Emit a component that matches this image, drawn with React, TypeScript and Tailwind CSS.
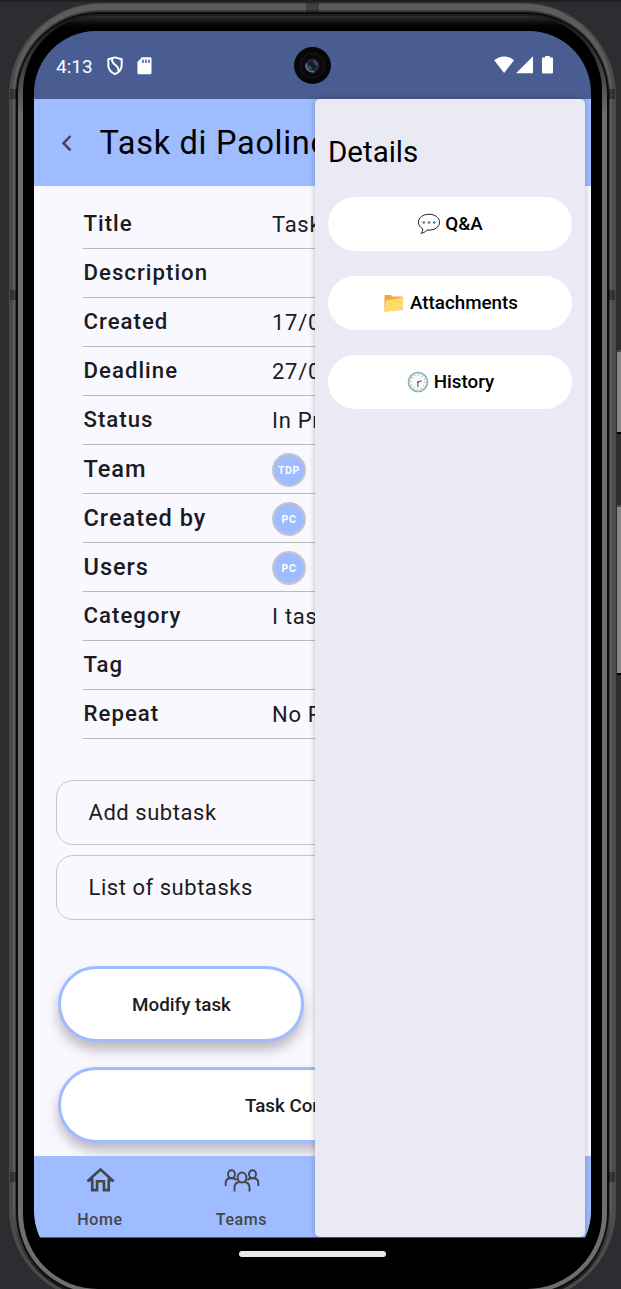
import type { ReactNode } from "react";

type Row = { label: string; value?: string; avatar?: string };

const rows: Row[] = [
  { label: "Title", value: "Task di Paolino" },
  { label: "Description" },
  { label: "Created", value: "17/01/2024" },
  { label: "Deadline", value: "27/01/2024" },
  { label: "Status", value: "In Progress" },
  { label: "Team", avatar: "TDP" },
  { label: "Created by", avatar: "PC" },
  { label: "Users", avatar: "PC" },
  { label: "Category", value: "I task" },
  { label: "Tag" },
  { label: "Repeat", value: "No Repeat" },
];

function Bezel({ children }: { children: ReactNode }) {
  return (
    <div className="ml-[9px] mt-[3px] h-[1298px] w-[607px] shrink-0 rounded-[92px] bg-[#4b4c4a] px-[4px] pt-[1px] pb-[3px]">
      <div className="h-full rounded-[88px] bg-linear-to-b from-[#5c5d5b] from-93% to-[#1c1c1c] to-98% px-[2px] pt-[6px] pb-[2px]">
        <div className="h-full rounded-[85px] bg-[#3c3d3b] bg-linear-to-b from-[#3c3d3b] from-95% to-[#0c0c0c] px-[1px] pt-[2px] pb-[1px]">
          <div className="h-full rounded-[83px] bg-[#0c0c0c] px-[2px] pt-[2px] pb-[2px]">
            <div className="h-full rounded-[80px] bg-linear-to-b from-[#1c1c1c] from-1% via-[#6e6e6e] via-8% to-[#6e6e6e] to-98% px-[5px] pt-[2px] pb-[4px]">
              <div className="h-full rounded-[75px] bg-black bg-linear-to-b from-[#2e2e2e] to-black to-[15px] px-[11px] pt-[15px] pb-[16px]">
                {children}
              </div>
            </div>
          </div>
        </div>
      </div>
    </div>
  );
}

function StatusBar() {
  return (
    <div className="flex h-[68px] shrink-0 items-center bg-[#4a5d92] text-white">
      <span className="ml-[22px] mt-[2px] w-[50px] text-[19px] leading-none">4:13</span>
      <svg className="mt-[2px]" width="18" height="20" viewBox="0 0 18 20" fill="none" stroke="white">
        <path d="M9 1.4 2.3 3.3V9c0 4 2.5 7.300 6.700 9.200 4.200-1.900 6.700-5.200 6.700-9.200V3.300Z" strokeWidth="2" strokeLinejoin="round" />
        <path d="M6.200 2.800c-.8 3.700 1.200 4.700 3.500 6.400 2 1.500 3.200 3 2.800 6.300" strokeWidth="2" />
      </svg>
      <svg className="ml-[13px] mt-[2px]" width="15" height="18" viewBox="0 0 15 18">
        <path d="M5 .3h8.200c.8 0 1.300.6 1.300 1.300v14.200c0 .8-.5 1.500-1.300 1.500H1.700c-.8 0-1.300-.6-1.300-1.500V5Z" fill="white" />
        <path d="M6 2.500v3.400M9 2.500v3.400M12 2.500v3.400" stroke="#4a5d92" strokeWidth="1.500" />
      </svg>
      <div className="ml-[142px] flex size-[37px] items-center justify-center rounded-full bg-[#060607]">
        <svg width="37" height="37" viewBox="0 0 37 37">
          <circle cx="18.500" cy="18.500" r="12.500" fill="#090a0b" stroke="#18191b" />
          <circle cx="18.500" cy="18.500" r="6.800" fill="#242a35" />
          <path d="M12.500 16.500a6.300 6.300 0 0 0 8 8" fill="none" stroke="#77757a" strokeWidth="1.700" />
          <circle cx="18.500" cy="18" r="4" fill="#121d2b" />
          <path d="M15 18.500c0 2 1 3 2.500 3" stroke="#236586" strokeWidth="2" fill="none" />
          <path d="M19 14.500c2.500.3 3.700 1.700 3.200 4" stroke="#543d6a" strokeWidth="2.500" fill="none" />
        </svg>
      </div>
      <svg className="ml-[163px]" width="60" height="20" viewBox="0 0 60 20" fill="white">
        <path d="M.2 5.200C5.800.1 14.200.1 20 5.200L10.100 18Z" />
        <path d="M39 1.300V18.300H22Z" />
        <path d="M51.200 2.600V1.100h4.600v1.500h2c.8 0 1.200.5 1.200 1.200v13.400c0 .8-.5 1.300-1.200 1.300h-8.500c-.8 0-1.300-.5-1.300-1.300V3.800c0-.7.500-1.200 1.300-1.200Z" />
      </svg>
    </div>
  );
}

function Detail({ label, value, avatar }: Row) {
  const labelStyle = avatar ? "mt-[1px] text-[23.6px] tracking-[0.95px]" : "-mt-[1px] text-[22.2px] tracking-[1.02px]";
  return (
    <div className="flex h-[49px] items-center border-b border-[#babac0] pl-[0.5px] text-[22px] text-[#1b1b21]">
      <span className={`w-[188.500px] font-medium ${labelStyle}`}>{label}</span>
      {value && <span className="whitespace-nowrap tracking-[0.72px]">{value}</span>}
      {avatar && (
        <span className="mt-[2px] flex size-[34px] items-center justify-center rounded-full border-2 border-[#c6c6ca] bg-[#9ebcff] pt-[1px] text-[10.500px] font-bold tracking-[0.7px] text-white">
          {avatar}
        </span>
      )}
    </div>
  );
}

function SubtaskBox({ children }: { children: ReactNode }) {
  return (
    <div className="flex h-[65px] w-[513px] items-center rounded-[17px] border-[1.500px] border-[#c6c6c8] pl-[31.500px] text-[22px] tracking-[0.54px] text-[#1b1b21]">
      {children}
    </div>
  );
}

const pill =
  "flex h-[76px] items-center justify-center rounded-full border-[3px] border-[#9ebcff] bg-white pl-[1px] pt-[2px] text-[18.8px] font-medium text-[#1b1b21] shadow-[0_8px_12px_rgba(60,40,45,0.3)]";

function Drawer() {
  return (
    <aside className="absolute top-[68px] left-[281px] h-[1138px] w-[270px] rounded-[5px] bg-[#eaeaf5] px-[13px] text-black shadow-[0_0_6px_rgba(0,0,0,0.25)]">
      <h2 className="mt-[35px] h-[36px] text-[29.5px] leading-[36px]">Details</h2>
      <div className="mt-[27px] flex flex-col gap-[25px] text-[18.8px] font-medium">
        <DrawerButton label="Q&A">
          <svg width="24" height="24" viewBox="0 0 24 24">
            <path d="M12 2.300C6 2.300 1.500 5.500 1.500 10.200c0 3 1.700 5.200 4.200 6.500.2 2-.5 3.600-1.800 4.600 2.700-.2 4.800-1.600 6.100-3.300 7 .7 12.500-2.600 12.500-7.800 0-4.700-4.500-7.900-10.500-7.900Z" fill="white" stroke="#222" strokeWidth="1" />
            <g fill="#607d8b">
              <circle cx="6.800" cy="10.500" r="1.350" />
              <circle cx="12" cy="10.500" r="1.350" />
              <circle cx="17.200" cy="10.500" r="1.350" />
            </g>
          </svg>
        </DrawerButton>
        <DrawerButton label="Attachments">
          <svg width="24" height="24" viewBox="0 0 24 24">
            <path d="M2.500 5.300c0-.8.500-1.200 1.300-1.200h5l1.500 1.500h9c.8 0 1.200.4 1.200 1.200v12L3 20.500c-.4 0-.5-.2-.5-.6Z" fill="#f6a63a" />
            <path d="M4.500 9.400 21 6.300c.5-.1.700.2.600.7L20.300 17c-.1.900-.5 1.300-1.300 1.500L3.300 21c-.5.100-.8-.2-.7-.7l1.100-10c.1-.5.3-.8.8-.9Z" fill="#ffdc68" />
          </svg>
        </DrawerButton>
        <DrawerButton label="History">
          <svg width="24" height="24" viewBox="0 0 24 24">
            <circle cx="12" cy="12" r="9.500" fill="#fafafa" stroke="#88b2bf" strokeWidth="1.700" />
            <circle cx="12" cy="12" r="7" fill="none" stroke="#777" strokeWidth="1.100" strokeDasharray=".8 2.865" />
            <path d="m12 12-.2 5M12 12l3.700-1.400" stroke="#5a3c3c" strokeWidth="1" />
            <circle cx="12" cy="12" r="1" fill="#8c4b4b" />
          </svg>
        </DrawerButton>
      </div>
    </aside>
  );
}

function DrawerButton({ label, children }: { label: string; children: ReactNode }) {
  return (
    <button className="flex h-[54px] w-[244px] items-center justify-center gap-[4px] rounded-full bg-white">
      {children}
      <span>{label}</span>
    </button>
  );
}

function BottomNav() {
  return (
    <nav className="flex h-[82px] shrink-0 border-b border-[#48598a] bg-[#9ebcff] text-[16px] font-medium tracking-[0.6px] text-[#45464a]">
      <div className="flex w-[131px] flex-col items-center pt-[8px] pl-[1px]">
        <svg className="ml-[1px]" width="33" height="33" viewBox="0 0 24 24" fill="none" stroke="#444548" strokeWidth="1.900">
          <path d="M2.500 12.500 12 4l9.500 8.500M6 10.500V19h3.500v-6.500h5V19H18v-8.500" />
          <path d="M2.500 12.200H6M18 12.200h3.500" strokeWidth="1.200" />
        </svg>
        <span className="mt-[11px]">Home</span>
      </div>
      <div className="flex w-[152px] flex-col items-center pt-[8px] pl-[1px]">
        <svg className="ml-[1px]" width="36" height="33" viewBox="0 0 36 33" fill="none" stroke="#444548" strokeWidth="1.900">
          <ellipse cx="7.500" cy="10.300" rx="3.500" ry="4" />
          <ellipse cx="28.500" cy="10.300" rx="3.500" ry="4" />
          <ellipse cx="18" cy="13.500" rx="4.400" ry="5" />
          <path d="M1.700 22v-3.200c0-2.600 1.500-4.200 4.300-4.600h3c1.700.3 2.900 1 3.600 2M34.300 22v-3.200c0-2.600-1.500-4.200-4.300-4.600h-3c-1.700.3-2.900 1-3.600 2" />
          <path d="M10.500 27.500v-4c0-3.200 1.600-5 4.900-5.500M25.500 27.500v-4c0-3.200-1.600-5-4.900-5.500" />
        </svg>
        <span className="mt-[11px]">Teams</span>
      </div>
    </nav>
  );
}

export default function App() {
  return (
    <div className="relative h-[1289px] w-[621px] overflow-hidden border-t-2 border-[#1e1f22] bg-[#2b2d30] font-[Roboto,sans-serif]">
      <div className="absolute top-[348px] right-0 h-[84px] w-[4px] border-y-2 border-b-black border-t-[#4a4a4a] bg-[#858684]" />
      <div className="absolute top-[503px] right-0 h-[170px] w-[4px] border-y-2 border-b-black border-t-[#4a4a4a] bg-[#858684]" />
      <div className="-mt-[2px]">
        <div className="flex">
          <Bezel>
            <div className="relative flex h-[1242px] w-[557px] flex-col overflow-hidden rounded-[62px] bg-black">
              <StatusBar />
              <header className="flex h-[87px] shrink-0 items-center bg-[#9ebcff]">
                <svg className="ml-[26px]" width="14" height="18" viewBox="0 0 14 18" fill="none" stroke="#45464a" strokeWidth="2.500">
                  <path d="M10.500 2 3.500 9.200l7 7.200" />
                </svg>
                <h1 className="ml-[25.500px] mt-[1px] text-[32.5px] leading-none tracking-[0.7px] whitespace-nowrap text-black">Task di Paolino</h1>
              </header>
              <main className="h-[970px] shrink-0 overflow-hidden bg-[#f9f8ff] pt-[14px]">
                <div className="mx-[49px]">
                  {rows.map((row) => (
                    <Detail key={row.label} {...row} />
                  ))}
                </div>
                <div className="mt-[41px] ml-[22px] flex flex-col gap-[10px]">
                  <SubtaskBox>Add subtask</SubtaskBox>
                  <SubtaskBox>List of subtasks</SubtaskBox>
                </div>
                <div className="mt-[46px] ml-[24px] flex flex-col gap-[25px]">
                  <button className={`${pill} w-[246px]`}>Modify task</button>
                  <button className={`${pill} w-[509px]`}>Task Completed</button>
                </div>
              </main>
              <BottomNav />
              <div className="mx-auto mt-[13px] h-[6px] w-[147px] shrink-0 rounded-full bg-[#e8e8e8]" />
              <Drawer />
            </div>
          </Bezel>
        </div>
      </div>
      <div className="absolute top-[87px] left-[10px] h-[10px] w-[7px] bg-black/35" />
      <div className="absolute top-[288px] left-[10px] h-[10px] w-[7px] bg-black/35" />
      <div className="absolute top-[1170px] left-[10px] h-[10px] w-[7px] bg-black/35" />
      <div className="absolute top-[87px] left-[608px] h-[10px] w-[7px] bg-black/35" />
      <div className="absolute top-[288px] left-[608px] h-[10px] w-[7px] bg-black/35" />
      <div className="absolute top-[1170px] left-[608px] h-[10px] w-[7px] bg-black/35" />
      <div className="absolute top-[1px] left-[306px] h-[9px] w-[13px] bg-black/30" />
    </div>
  );
}
